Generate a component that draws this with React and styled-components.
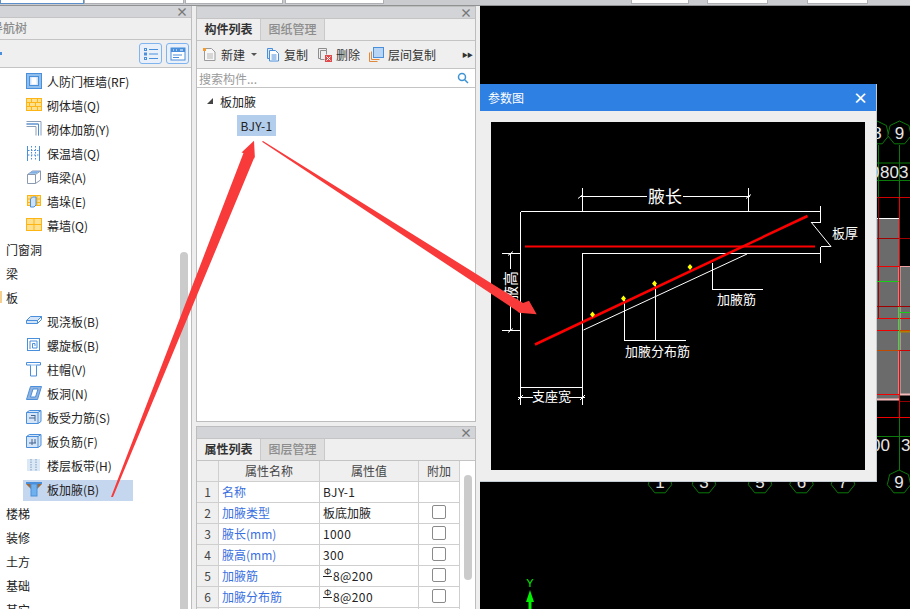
import React from 'react'
import styled, { createGlobalStyle } from 'styled-components'

const GlobalStyle = createGlobalStyle`
	html, body {
		margin: 0;
		padding: 0;
		background: #000;
	}
	* {
		box-sizing: border-box;
	}
`

const FONT = `"Noto Sans CJK SC", "Liberation Sans", sans-serif`
const BLUE = '#4a8fdc'
const YELLOW = '#fdb515'

const Page = styled.div`
	position: relative;
	width: 910px;
	height: 609px;
	overflow: hidden;
	display: flex;
	flex-direction: column;
	font-family: ${FONT};
	font-size: 12px;
	color: #222;
	background: #eee;
`
const TopBar = styled.div`
	height: 6px;
	flex: none;
	display: flex;
	align-items: flex-start;
	background: #c9cbce;
	border-bottom: 1px solid #8f9193;
`
const TopBox = styled.div`
	height: 4px;
	flex: none;
	width: ${props => props.$width}px;
	margin-left: ${props => props.$gap || 0}px;
	background: #fff;
	border: 1px solid ${props => props.$accent ? '#5b8ecb' : '#adafb2'};
	border-top: 0;
`
const Main = styled.div`
	flex: 1;
	min-height: 0;
	display: flex;
`
const NavPanel = styled.div`
	width: 192px;
	flex: none;
	display: flex;
	flex-direction: column;
	background: #fff;
	border-right: 1px solid #bdbdbd;
`
const MiddleColumn = styled.div`
	width: 280px;
	flex: none;
	margin-left: 4px;
	display: flex;
	flex-direction: column;
	gap: 4px;
`
const Panel = styled.div`
	height: ${props => props.$height}px;
	flex: none;
	display: flex;
	flex-direction: column;
	overflow: hidden;
	background: #fff;
	border: 1px solid #bdbdbd;
	border-bottom-width: ${props => props.$open ? 0 : 1}px;
`
const TitleBar = styled.div`
	height: 11px;
	flex: none;
	display: flex;
	align-items: center;
	justify-content: flex-end;
	padding-right: 3px;
	background: #d3d4d8;
	color: #777;
	font-size: 12px;
	font-weight: 700;
	line-height: 11px;
`
const TabRow = styled.div`
	height: 23px;
	flex: none;
	display: flex;
	background: #efefef;
	border-top: 1px solid #c4c4c4;
	border-bottom: 1px solid #c4c4c4;
	overflow: hidden;
`
const Tab = styled.div`
	width: 64px;
	flex: none;
	display: flex;
	align-items: center;
	justify-content: center;
	padding-bottom: 2px;
	font-size: 12px;
	font-weight: ${props => props.$active ? 700 : 500};
	color: ${props => props.$active ? '#333' : '#8c8c8c'};
	background: ${props => props.$active ? '#efefef' : '#dedede'};
	border-right: 1px solid #c9c9c9;
`
const ClippedTab = styled.div`
	margin-left: -9px;
	padding-bottom: 2px;
	display: flex;
	align-items: center;
	font-size: 12px;
	font-weight: 500;
	color: #8c8c8c;
`
const NavTools = styled.div`
	height: 28px;
	flex: none;
	display: flex;
	align-items: center;
	justify-content: flex-end;
	gap: 4px;
	padding-right: 2px;
	background: #efefef;
	border-bottom: 1px solid #c4c4c4;
`
const NavToolDot = styled.span`
	width: 2px;
	height: 3px;
	margin-right: auto;
	background: ${BLUE};
`
const NavToolButton = styled.div`
	width: 23px;
	height: 21px;
	display: flex;
	align-items: center;
	justify-content: center;
	background: #e9f0f9;
	border: 1px solid #7fb4ef;
	border-radius: 3px;
`
const NavBody = styled.div`
	flex: 1;
	min-height: 0;
	display: flex;
	overflow: hidden;
`
const NavList = styled.div`
	width: 180px;
	flex: none;
	padding-top: 2px;
`
const NavGroup = styled.div`
	position: relative;
	height: 24px;
	display: flex;
	align-items: center;
	padding: 0 0 2px 6px;
	font-size: 12px;
`
const GroupMark = styled.span`
	position: absolute;
	left: 0;
	top: 5px;
	width: 2px;
	height: 12px;
	background: #f5cf8e;
`
const NavRow = styled.div`
	height: 24px;
	display: flex;
	align-items: center;
`
const NavItem = styled.div`
	width: 110px;
	height: 21px;
	margin-left: 23px;
	display: flex;
	align-items: center;
	gap: 5px;
	padding: 0 0 2px 3px;
	white-space: nowrap;
	background: ${props => props.$selected ? '#c5d6ef' : 'transparent'};
`
const ScrollTrack = styled.div`
	width: ${props => props.$width}px;
	flex: none;
	display: flex;
	padding-top: ${props => props.$top}px;
	padding-left: ${props => props.$left || 0}px;
	background: #fff;
`
const ScrollThumb = styled.div`
	width: 8px;
	height: ${props => props.$height}px;
	background: #cbcbcb;
	border-radius: 4px;
`
const Toolbar = styled.div`
	height: 28px;
	flex: none;
	display: flex;
	align-items: center;
	padding-left: 5px;
	background: #efefef;
	border-bottom: 1px solid #c4c4c4;
`
const ToolButton = styled.div`
	display: flex;
	align-items: center;
	gap: 4px;
	margin-right: ${props => props.$gap}px;
	white-space: nowrap;
	color: #333;
`
const Caret = styled.span`
	width: 0;
	height: 0;
	margin-left: 2px;
	border-left: 3px solid transparent;
	border-right: 3px solid transparent;
	border-top: 3px solid #555;
`
const More = styled.span`
	margin-left: auto;
	margin-right: 3px;
	font-size: 6px;
	letter-spacing: -1px;
	color: #333;
`
const SearchRow = styled.div`
	height: 19px;
	flex: none;
	display: flex;
	align-items: center;
	justify-content: space-between;
	padding: 0 6px 0 2px;
	color: #9a9a9a;
	border-bottom: 1px solid #c4c4c4;
`
const TreeBody = styled.div`
	flex: 1;
	padding: 2px 0 0 10px;
`
const TreeRoot = styled.div`
	height: 22px;
	margin-bottom: 3px;
	display: flex;
	align-items: center;
	gap: 7px;
`
const TreeArrow = styled.span`
	width: 0;
	height: 0;
	border-left: 6px solid transparent;
	border-bottom: 6px solid #444;
`
const TreeLeaf = styled.div`
	width: 39px;
	height: 21px;
	margin-left: 30px;
	display: flex;
	align-items: center;
	justify-content: center;
	letter-spacing: 0.3px;
	background: #b3cdec;
`
const TableWrap = styled.div`
	flex: 1;
	min-height: 0;
	display: flex;
	overflow: hidden;
`
const Table = styled.div`
	width: 263px;
	flex: none;
	display: grid;
	grid-template-columns: 22px 101px 99px 41px;
	grid-auto-rows: 21px;
`
const Cell = styled.div`
	display: flex;
	align-items: center;
	justify-content: ${props => props.$center ? 'center' : 'flex-start'};
	padding: 0 0 2px ${props => props.$center ? 0 : 3}px;
	letter-spacing: ${props => props.$latin ? 0.4 : 0}px;
	color: ${props => props.$link ? '#3a6fe0' : props.$muted ? '#444' : '#222'};
	background: ${props => props.$head ? '#efefef' : '#fff'};
	border-right: 1px solid #cfcfcf;
	border-bottom: 1px solid #cfcfcf;
	white-space: nowrap;
`
const Check = styled.span`
	width: 14px;
	height: 14px;
	background: #fff;
	border: 1px solid #8a8a8a;
	border-radius: 2px;
`
const RebarMark = styled.span`
	display: inline-block;
	width: 9px;
	margin-right: 1px;
	font-size: 9px;
	line-height: 8px;
	text-align: center;
	letter-spacing: 0;
	border-bottom: 1px solid #222;
	transform: translateY(-3px);
`
const CanvasArea = styled.div`
	position: relative;
	flex: 1;
	margin-left: 4px;
	background: #000;
	overflow: hidden;
`
const CanvasDrawing = styled.svg`
	display: block;
	width: 430px;
	height: 603px;
`
const Dialog = styled.div`
	position: absolute;
	left: 0;
	top: 78px;
	width: 397px;
	height: 398px;
	display: flex;
	flex-direction: column;
	background: #eeeeee;
	border-right: 1px solid #c5cbd3;
	border-bottom: 1px solid #c5cbd3;
`
const DialogHead = styled.div`
	height: 27px;
	flex: none;
	display: flex;
	align-items: center;
	justify-content: space-between;
	padding: 0 8px;
	color: #fff;
	background: #2f80e3;
`
const DialogClose = styled.span`
	font-size: 15px;
	font-weight: 700;
	line-height: 15px;
`
const DialogBody = styled.div`
	flex: 1;
	padding: 11px;
`
const Figure = styled.svg`
	display: block;
	width: 374px;
	height: 348px;
	background: #000;
`
const ArrowLayer = styled.svg`
	position: absolute;
	left: 0;
	top: 0;
	width: 910px;
	height: 609px;
	pointer-events: none;
`

const Icon = ({ children }) => (
	<svg width="16" height="16" viewBox="0 0 16 16" fill="none" style={{ flex: 'none' }}>{children}</svg>
)

const icons = {
	frame: <><rect x="0.5" y="0.5" width="15" height="15" fill="#8fbdec" stroke={BLUE} /><rect x="3.5" y="3.5" width="9" height="9" fill="#cfe2f7" stroke={BLUE} /><rect x="5.5" y="4.5" width="5" height="7" fill="#fff" /></>,
	brick: <><rect x="0.5" y="1.5" width="15" height="12" fill="#ffe08e" stroke={YELLOW} /><path d="M1 5.5h14M1 9.5h14M5.5 2v3.5M11.5 2v3.5M3.5 5.5v4M9.5 5.5v4M5.5 9.5v4M11.5 9.5v4" stroke={YELLOW} /></>,
	rebarWall: <><path d="M0.5 0.5h14.5v14M0.5 3h12v11.5M0.5 5.5h9.5v9" stroke="#8aa0b8" /><path d="M0.5 3h12v11.5" stroke={BLUE} /></>,
	insulation: <><path d="M1.5 1v15M13.5 1v15" stroke={BLUE} /><path d="M5.5 1v15M9.5 1v15M2 5.5h11M2 10h11" stroke={BLUE} strokeDasharray="1.5 1.5" /></>,
	beam: <><path d="M1.5 5.5l5-3.5h8v9l-5 3.5h-8z" fill="#fff" stroke="#8a9ab0" /><path d="M1.5 5.5h8v9M9.5 5.5l5-3.5" stroke="#8a9ab0" /><path d="M6 2.2l-3 2.6h7l4-2.8z" fill="#7fb0e6" /></>,
	pier: <><rect x="1.5" y="2.5" width="13" height="10" fill="#ffe08e" stroke={YELLOW} /><path d="M2 6h12M2 9.5h12M5 3v9M11 3v9" stroke={YELLOW} /><path d="M4.5 6l2-2h3.5v8l-2 2h-3.5z" fill="#cfe2f7" stroke={BLUE} /></>,
	curtain: <><rect x="0.5" y="1.5" width="15" height="12" fill="#ffe08e" stroke={YELLOW} /><path d="M1 7.5h14M8 2v11" stroke={YELLOW} /></>,
	slab: <><path d="M0.5 7.5l4-4h11l-4 4v3h-11z" fill="#d5e5f7" stroke={BLUE} /><path d="M0.5 7.5h11l4-4v3l-4 4" stroke={BLUE} /></>,
	spiral: <><rect x="1.5" y="1.5" width="12" height="12" fill="#fff" stroke={BLUE} /><path d="M4 12V4h7v7H6.5V6.5h2.5v2.5" stroke={BLUE} /></>,
	cap: <><path d="M0.5 1.5h14v2.5h-4v11h-6v-11h-4z" fill="#fff" stroke={BLUE} /><path d="M1 4h13" stroke="#8fbdec" /></>,
	hole: <><path d="M0.5 14.5l4-13h11l-4 13z" fill="#8fb2df" stroke={BLUE} /><path d="M4.5 12l2.5-8h5l-2.5 8z" fill="#fff" stroke={BLUE} /></>,
	slabForce: <><path d="M0.5 3.5l3-2h11.5v11l-3 2h-11.5z" fill="#d5e5f7" stroke={BLUE} /><path d="M0.5 3.5h11.5v11M12 3.5l3-2" stroke={BLUE} /><path d="M3 9h6M9 6v6M5 6.5h4" stroke="#44658c" /></>,
	slabNeg: <><path d="M0.5 3.5l3-2h11.5v11l-3 2h-11.5z" fill="#d5e5f7" stroke={BLUE} /><path d="M0.5 3.5h11.5v11M12 3.5l3-2" stroke={BLUE} /><path d="M3 10h7M6 6v6M9 6v4" stroke="#44658c" /></>,
	band: <><rect x="1" y="2" width="13" height="12" fill="#dbe8f6" /><path d="M5 2v12M10 2v12" stroke="#7f9cbd" strokeDasharray="1.5 1" /></>,
	haunch: <><path d="M0 1h16v2H0z" fill="#4a8fdc" /><path d="M0 3h16l-5 5V3H5v5z" fill="#9a6b3f" /><rect x="5" y="3" width="6" height="12" fill="#6fb1ee" stroke={BLUE} /></>
}

const navRows = [
	{ icon: 'frame', label: '人防门框墙(RF)' },
	{ icon: 'brick', label: '砌体墙(Q)' },
	{ icon: 'rebarWall', label: '砌体加筋(Y)' },
	{ icon: 'insulation', label: '保温墙(Q)' },
	{ icon: 'beam', label: '暗梁(A)' },
	{ icon: 'pier', label: '墙垛(E)' },
	{ icon: 'curtain', label: '幕墙(Q)' },
	{ group: '门窗洞' },
	{ group: '梁' },
	{ group: '板', mark: true },
	{ icon: 'slab', label: '现浇板(B)' },
	{ icon: 'spiral', label: '螺旋板(B)' },
	{ icon: 'cap', label: '柱帽(V)' },
	{ icon: 'hole', label: '板洞(N)' },
	{ icon: 'slabForce', label: '板受力筋(S)' },
	{ icon: 'slabNeg', label: '板负筋(F)' },
	{ icon: 'band', label: '楼层板带(H)' },
	{ icon: 'haunch', label: '板加腋(B)', selected: true },
	{ group: '楼梯' },
	{ group: '装修' },
	{ group: '土方' },
	{ group: '基础' },
	{ group: '其它' }
]

const propRows = [
	{ name: '名称', value: 'BJY-1', latin: true },
	{ name: '加腋类型', value: '板底加腋', check: true },
	{ name: '腋长(mm)', value: '1000', latin: true, check: true },
	{ name: '腋高(mm)', value: '300', latin: true, check: true },
	{ name: '加腋筋', value: '8@200', latin: true, rebar: true, check: true },
	{ name: '加腋分布筋', value: '8@200', latin: true, rebar: true, check: true },
	{ name: '', value: '' }
]

const ListToggle = () => (
	<svg width="16" height="14" viewBox="0 0 16 14" fill="none" stroke={BLUE}>
		<rect x="1.5" y="1.5" width="2" height="2" /><rect x="1.5" y="6" width="2" height="2" /><rect x="1.5" y="10.5" width="2" height="2" />
		<path d="M6 2.5h9M6 7h9M6 11.5h9" />
	</svg>
)
const WindowToggle = () => (
	<svg width="16" height="14" viewBox="0 0 16 14" fill="none">
		<rect x="1" y="1" width="14" height="12" fill="#fff" stroke={BLUE} />
		<rect x="1" y="1" width="14" height="4" fill={BLUE} />
		<path d="M3 3h1M6 3h1M10 3h3" stroke="#fff" />
		<path d="M3 8h9M3 10.5h6" stroke={BLUE} />
	</svg>
)

const NavTree = () => (
	<NavBody>
		<NavList>
			{navRows.map((row, index) => row.group
				? <NavGroup key={index}>{row.mark && <GroupMark />}{row.group}</NavGroup>
				: <NavRow key={index}>
					<NavItem $selected={row.selected}><Icon>{icons[row.icon]}</Icon>{row.label}</NavItem>
				</NavRow>
			)}
		</NavList>
		<ScrollTrack $width={11} $top={184}><ScrollThumb $height={400} /></ScrollTrack>
	</NavBody>
)

const ComponentTools = () => (
	<Toolbar>
		<ToolButton $gap={9}>
			<svg width="15" height="15" viewBox="0 0 15 15" fill="none">
				<path d="M2.5 1.5h7l3.5 3.5v8.5h-10.5z" fill="#f7f7f7" stroke="#9a9a9a" />
				<path d="M5 7h6M5 9h6M5 11h6" stroke="#b5b5b5" />
				<path d="M1 1h3v3H1z" fill="#f39a2d" />
			</svg>
			新建<Caret />
		</ToolButton>
		<ToolButton $gap={9}>
			<svg width="14" height="15" viewBox="0 0 14 15" fill="none">
				<path d="M1.5 1.5h5v10h-5z" fill="#d8e7f8" stroke={BLUE} />
				<path d="M3.5 3.5h6l3 3v7.5h-9z" fill="#fff" stroke={BLUE} />
				<path d="M5.5 8h5M5.5 10h5M5.5 12h5" stroke={BLUE} />
			</svg>
			复制
		</ToolButton>
		<ToolButton $gap={9}>
			<svg width="15" height="15" viewBox="0 0 15 15" fill="none">
				<path d="M1.5 1.5h8v2M1.5 1.5v10h2" stroke="#8e8e8e" />
				<path d="M3.5 3.5h6v4" stroke="#8e8e8e" />
				<path d="M3.5 3.5v9h4" stroke="#8e8e8e" />
				<rect x="8" y="8" width="7" height="7" fill="#e04a4a" />
				<path d="M9.5 9.5l4 4M13.5 9.5l-4 4" stroke="#fff" />
			</svg>
			删除
		</ToolButton>
		<ToolButton>
			<svg width="15" height="15" viewBox="0 0 15 15" fill="none">
				<path d="M0.5 5.5v9h8M2.5 4.5v8h8" stroke="#e0883c" />
				<rect x="4.5" y="0.5" width="10" height="10" fill="#b9d5f5" stroke={BLUE} />
			</svg>
			层间复制
		</ToolButton>
		<More>▶▶</More>
	</Toolbar>
)

const Bubble = ({ x, y, label, r = 12 }) => {
	const points = Array.from({ length: 7 }, (_, i) => {
		const angle = -Math.PI / 2 + (i * 2 * Math.PI) / 7
		return `${(x + r * Math.cos(angle)).toFixed(1)},${(y + r * Math.sin(angle)).toFixed(1)}`
	}).join(' ')
	return (
		<g>
			<polygon points={points} fill="#000" stroke="#0a7a0a" />
			<text x={x} y={y + 6} textAnchor="middle" fontSize="17" fill="#e6e6e6" fontFamily="Liberation Sans, sans-serif">{label}</text>
		</g>
	)
}

const Plan = () => (
	<CanvasDrawing viewBox="480 6 430 603">
		<path d="M878.5 145V197M899.5 145V197M860 163H910M860 180.5H910" stroke="#0a7a0a" />
		<rect x="877" y="218" width="23" height="182" fill="#6b6b6b" />
		<rect x="900" y="266" width="10" height="129" fill="#6b6b6b" />
		<path d="M877 218.5H899.5V266" stroke="#fff" fill="none" />
		<path d="M900 266.5H910" stroke="#f0a0a0" />
		<path d="M899.5 266V395M877 399.5H899.5M900 394.5H910" stroke="#f4b8b8" strokeWidth="2" />
		<path d="M877 197.5H910" stroke="#d00000" />
		<path d="M878.5 197V318" stroke="#a00000" />
		<path d="M877 238.5H910M877 306.5H910" stroke="#a00000" />
		<path d="M877 266.5H899M877 318.5H910M877 330.5H910M877 394.5H899M877 417.5H910" stroke="#f00000" />
		<path d="M900 401.5H910" stroke="#900000" />
		<path d="M877 350.5H910" stroke="#d00000" />
		<path d="M877 350.5H899" stroke="#c04a00" />
		<path d="M899.5 197V418" stroke="#f00000" />
		<path d="M877 281.5H899M899.5 307V350M899 312.5H910" stroke="#16d016" />
		<path d="M900 331.5H910" stroke="#b08000" strokeWidth="2" />
		<path d="M899.5 418V470M860 436.5H910" stroke="#0a7a0a" />
		<text x="870" y="178" fontSize="17" fill="#e6e6e6" fontFamily="Liberation Sans, sans-serif">0</text>
		<text x="880" y="178" fontSize="17" fill="#e6e6e6" fontFamily="Liberation Sans, sans-serif">803</text>
		<text x="871" y="451" fontSize="17" fill="#e6e6e6" fontFamily="Liberation Sans, sans-serif">00</text>
		<text x="901" y="451" fontSize="17" fill="#e6e6e6" fontFamily="Liberation Sans, sans-serif">3</text>
		<Bubble x={877} y={133} label="8" />
		<Bubble x={899.5} y={133} label="9" />
		{[[660, '1'], [704, '3'], [760, '5'], [801.5, '6'], [843, '7'], [899, '9']].map(([x, label]) => (
			<Bubble key={label} x={x} y={482} label={label} />
		))}
		<text x="530" y="587" textAnchor="middle" fontSize="11" fill="#00f000" fontFamily="Liberation Sans, sans-serif">Y</text>
		<path d="M530 590l4 12h-2.5v7h-3v-7h-2.5z" fill="#00f000" />
	</CanvasDrawing>
)

const ParamFigure = () => (
	<Figure viewBox="491 122 374 348">
		<g stroke="#fff" fill="none" shapeRendering="crispEdges">
			<path d="M520.5 211.5H820.5M820.5 206V222M520.5 211.5V405M582.5 188V211M748.5 188V211" />
			<path d="M580 196.5H647M683 196.5H750" />
			<path d="M582.5 405V253.5H820.5M820.5 246.5V263" />
			<path d="M820.5 222H811M820.5 246.5H831" />
			<path d="M502 253.5H520M502 330.5H520M510.5 253V269M510.5 302V330" />
			<path d="M712.5 263V289.5H763M624.5 299V340.5H686M655.5 284V340.5" />
			<path d="M520.5 387.5H582.5M518 397.5H533M569 397.5H585" />
		</g>
		<g stroke="#fff" fill="none">
			<path d="M811 222L831 246.5M583.5 330L747 254" />
			<path d="M578 198.5l5-4M746 198.5l5-4M508 255.5l5-4M508 332.5l5-4M518 400l5-5M580 400l5-5" />
		</g>
		<path d="M525 246.5H815" stroke="#fc0000" strokeWidth="2" />
		<path d="M535 344.5L807.5 216" stroke="#fc0000" strokeWidth="2.5" />
		<g fill="#ffff00">
			{[[592.5, 314.5], [623.5, 298.5], [654.5, 283.5], [690, 267]].map(([x, y]) => (
				<path key={x} d={`M${x} ${y - 3}l2.5 3l-2.5 3l-2.5-3z`} />
			))}
		</g>
		<g fill="#fff" fontFamily={FONT} fontSize="13">
			<text x="665" y="203" textAnchor="middle" fontSize="17">腋长</text>
			<text x="832" y="238">板厚</text>
			<text x="717" y="304">加腋筋</text>
			<text x="625" y="356">加腋分布筋</text>
			<text x="532" y="401">支座宽</text>
			<text transform="translate(515.5 286) rotate(-90)" textAnchor="middle" fontSize="15">腋高</text>
		</g>
	</Figure>
)

const App = () => (
	<Page>
		<GlobalStyle />
		<TopBar>
			<TopBox $width={84} $accent />
			<TopBox $width={100} />
			<TopBox $width={98} $gap={1} />
			<TopBox $width={99} $gap={2} />
			<TopBox $width={58} $gap={247} />
			<TopBox $width={61} $gap={18} />
			<TopBox $width={61} $gap={39} />
		</TopBar>
		<Main>
			<NavPanel>
				<TitleBar>×</TitleBar>
				<TabRow><ClippedTab>导航树</ClippedTab></TabRow>
				<NavTools>
					<NavToolDot />
					<NavToolButton><ListToggle /></NavToolButton>
					<NavToolButton><WindowToggle /></NavToolButton>
				</NavTools>
				<NavTree />
			</NavPanel>
			<MiddleColumn>
				<Panel $height={416}>
					<TitleBar>×</TitleBar>
					<TabRow>
						<Tab $active>构件列表</Tab>
						<Tab>图纸管理</Tab>
					</TabRow>
					<ComponentTools />
					<SearchRow>
						搜索构件...
						<svg width="12" height="12" viewBox="0 0 12 12" fill="none" stroke="#3f93d2" strokeWidth="1.5">
							<circle cx="5" cy="5" r="3.5" />
							<path d="M7.5 7.5L11 11" />
						</svg>
					</SearchRow>
					<TreeBody>
						<TreeRoot><TreeArrow />板加腋</TreeRoot>
						<TreeLeaf>BJY-1</TreeLeaf>
					</TreeBody>
				</Panel>
				<Panel $height={183} $open>
					<TitleBar>×</TitleBar>
					<TabRow>
						<Tab $active>属性列表</Tab>
						<Tab>图层管理</Tab>
					</TabRow>
					<TableWrap>
						<Table>
							<Cell $head />
							<Cell $head $center $muted>属性名称</Cell>
							<Cell $head $center $muted>属性值</Cell>
							<Cell $head $center $muted>附加</Cell>
							{propRows.map((row, index) => (
								<React.Fragment key={index}>
									<Cell $head $center $muted>{index + 1}</Cell>
									<Cell $link>{row.name}</Cell>
									<Cell $latin={row.latin}>{row.rebar && <RebarMark>Φ</RebarMark>}{row.value}</Cell>
									<Cell $center>{row.check && <Check />}</Cell>
								</React.Fragment>
							))}
						</Table>
						<ScrollTrack $width={15} $top={14} $left={4}><ScrollThumb $height={105} /></ScrollTrack>
					</TableWrap>
				</Panel>
			</MiddleColumn>
			<CanvasArea>
				<Plan />
				<Dialog>
					<DialogHead>
						参数图
						<DialogClose>×</DialogClose>
					</DialogHead>
					<DialogBody><ParamFigure /></DialogBody>
				</Dialog>
			</CanvasArea>
		</Main>
		<ArrowLayer viewBox="0 0 910 609">
			<path d="M111 497L113 497L254.5 157L255 160L254 140.7L241.5 152.5L243.5 153Z" fill="#f83a3a" />
			<path d="M262 141.7L263 141L523 303L529 300.7L536.7 314.3L519 312.7L517 311Z" fill="#f83a3a" />
		</ArrowLayer>
	</Page>
)

export default App
